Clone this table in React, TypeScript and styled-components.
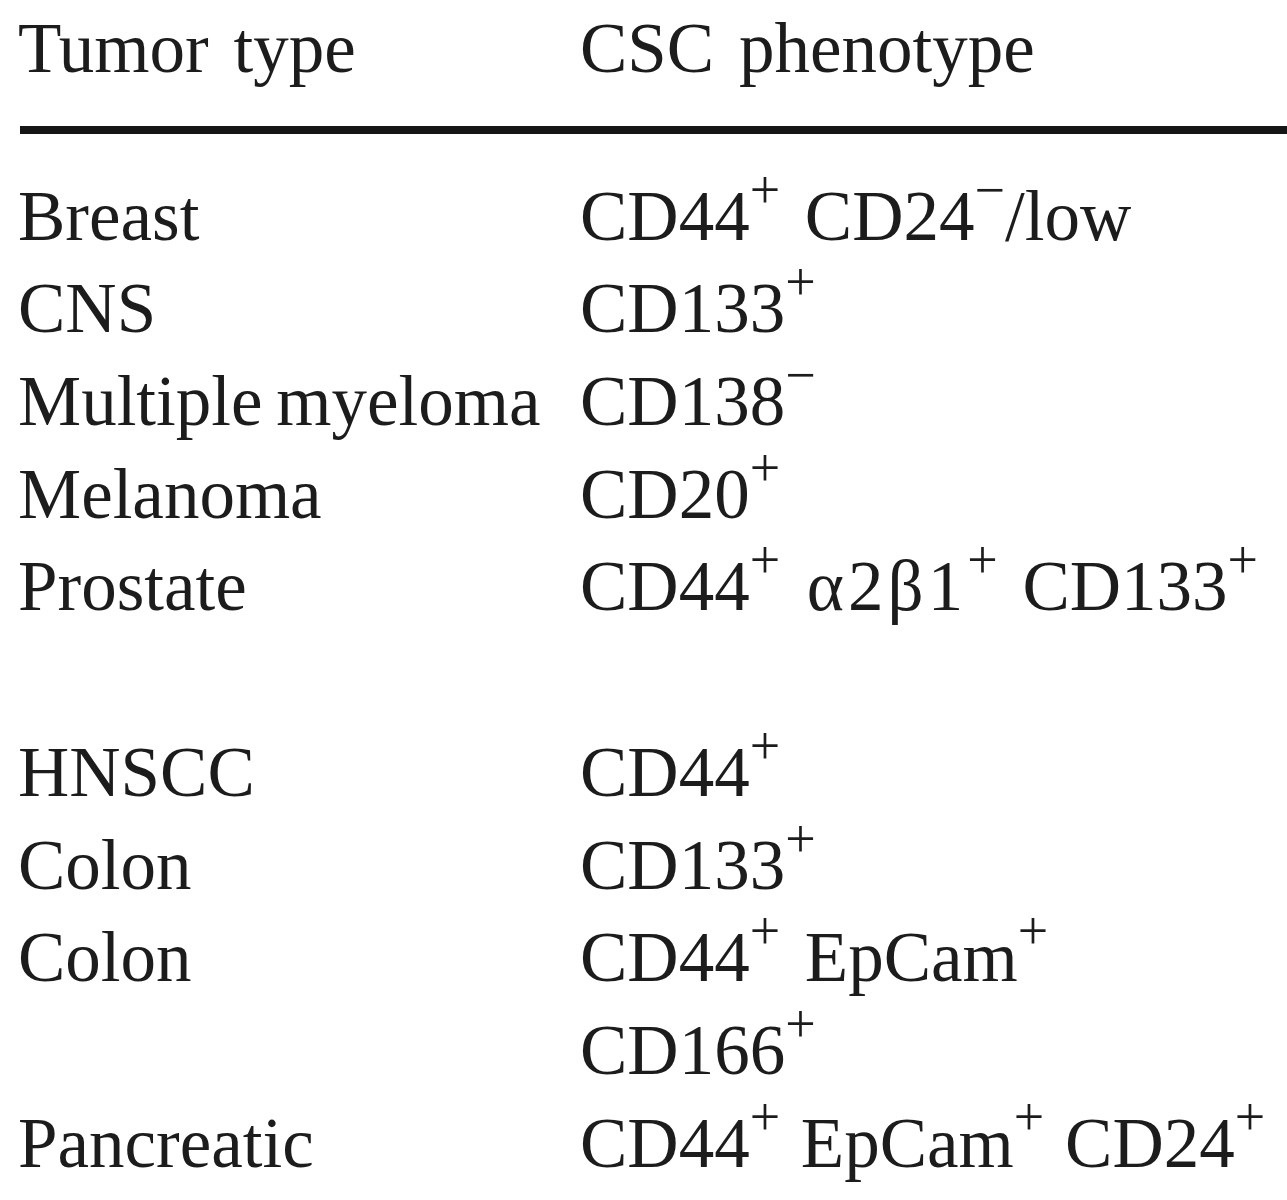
import styled, { createGlobalStyle } from "styled-components";

const GlobalStyle = createGlobalStyle`
  html, body {
    margin: 0;
    padding: 0;
    background: #ffffff;
  }
`;

const Page = styled.div`
  width: 1287px;
  padding: 2px 0 0 18px;
  box-sizing: border-box;
  font-family: "Liberation Serif", "Times New Roman", serif;
  font-size: 71px;
  color: #1c1c1c;
  overflow: hidden;
`;

const Row = styled.div`
  display: grid;
  grid-template-columns: 562px 1fr;
  line-height: 92.7px;
  height: 92.7px;
  white-space: nowrap;
`;

const Rule = styled.div`
  height: 8px;
  background: #161616;
  margin: 31px 0 36px 2px;
`;

// word spacing differs a little from cell to cell in the typeset table
const Cell = styled.div<{ $ws?: number }>`
  word-spacing: ${(p) => p.$ws ?? 7}px;
`;

const Sup = styled.span`
  font-size: 54px;
  line-height: 0;
  vertical-align: 32px;
`;

const Greek = styled.span`
  letter-spacing: 4px;
  margin-left: 2px;
`;

type Mark = "+" | "-";

const M = ({ m }: { m: Mark }) => <Sup>{m === "+" ? "+" : "−"}</Sup>;

export default function App() {
  return (
    <>
      <GlobalStyle />
      <Page>
        <Row>
          <Cell>Tumor type</Cell>
          <Cell>CSC phenotype</Cell>
        </Row>
        <Rule />
        <Row>
          <Cell>Breast</Cell>
          <Cell>
            CD44<M m="+" /> CD24<M m="-" />/low
          </Cell>
        </Row>
        <Row>
          <Cell>CNS</Cell>
          <Cell>
            CD133<M m="+" />
          </Cell>
        </Row>
        <Row>
          <Cell $ws={-4}>Multiple myeloma</Cell>
          <Cell>
            CD138<M m="-" />
          </Cell>
        </Row>
        <Row>
          <Cell>Melanoma</Cell>
          <Cell>
            CD20<M m="+" />
          </Cell>
        </Row>
        <Row>
          <Cell>Prostate</Cell>
          <Cell>
            CD44<M m="+" /> <Greek>α2β1</Greek>
            <M m="+" /> CD133<M m="+" />
          </Cell>
        </Row>
        <Row>
          <Cell />
          <Cell />
        </Row>
        <Row>
          <Cell>HNSCC</Cell>
          <Cell>
            CD44<M m="+" />
          </Cell>
        </Row>
        <Row>
          <Cell>Colon</Cell>
          <Cell>
            CD133<M m="+" />
          </Cell>
        </Row>
        <Row>
          <Cell>Colon</Cell>
          <Cell>
            CD44<M m="+" /> EpCam<M m="+" />
          </Cell>
        </Row>
        <Row>
          <Cell />
          <Cell>
            CD166<M m="+" />
          </Cell>
        </Row>
        <Row>
          <Cell>Pancreatic</Cell>
          <Cell $ws={3}>
            CD44<M m="+" /> EpCam<M m="+" /> CD24<M m="+" />
          </Cell>
        </Row>
      </Page>
    </>
  );
}
